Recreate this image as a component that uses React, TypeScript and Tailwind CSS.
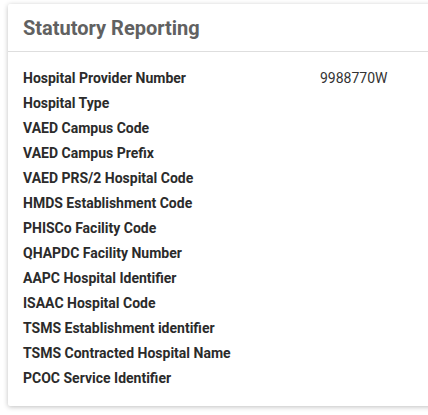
import React from "react";

const rows: [string, string][] = [
  ["Hospital Provider Number", "9988770W"],
  ["Hospital Type", ""],
  ["VAED Campus Code", ""],
  ["VAED Campus Prefix", ""],
  ["VAED PRS/2 Hospital Code", ""],
  ["HMDS Establishment Code", ""],
  ["PHISCo Facility Code", ""],
  ["QHAPDC Facility Number", ""],
  ["AAPC Hospital Identifier", ""],
  ["ISAAC Hospital Code", ""],
  ["TSMS Establishment identifier", ""],
  ["TSMS Contracted Hospital Name", ""],
  ["PCOC Service Identifier", ""],
];

export default function App() {
  return (
    <div className="w-[428px] h-[415px] bg-white overflow-hidden pl-2 pt-1" style={{ fontFamily: "Roboto, sans-serif" }}>
      <div className="w-[440px] h-[402px] bg-white rounded-[2px] shadow-[0_1px_5px_rgba(0,0,0,0.25)]">
        <div className="h-[48px] border-b border-[#dedede] pl-[15px] flex items-center">
          <h2 className="text-[20px] font-bold text-[#616161] leading-none">Statutory Reporting</h2>
        </div>
        <div className="pl-[15px] pt-[14px]">
          {rows.map(([k, v]) => (
            <div key={k} className="flex h-[25px] items-center text-[14px] text-[#2b2b2b]">
              <div className="w-[297px] font-bold">{k}</div>
              <div className="text-[#333]">{v}</div>
            </div>
          ))}
        </div>
      </div>
    </div>
  );
}
